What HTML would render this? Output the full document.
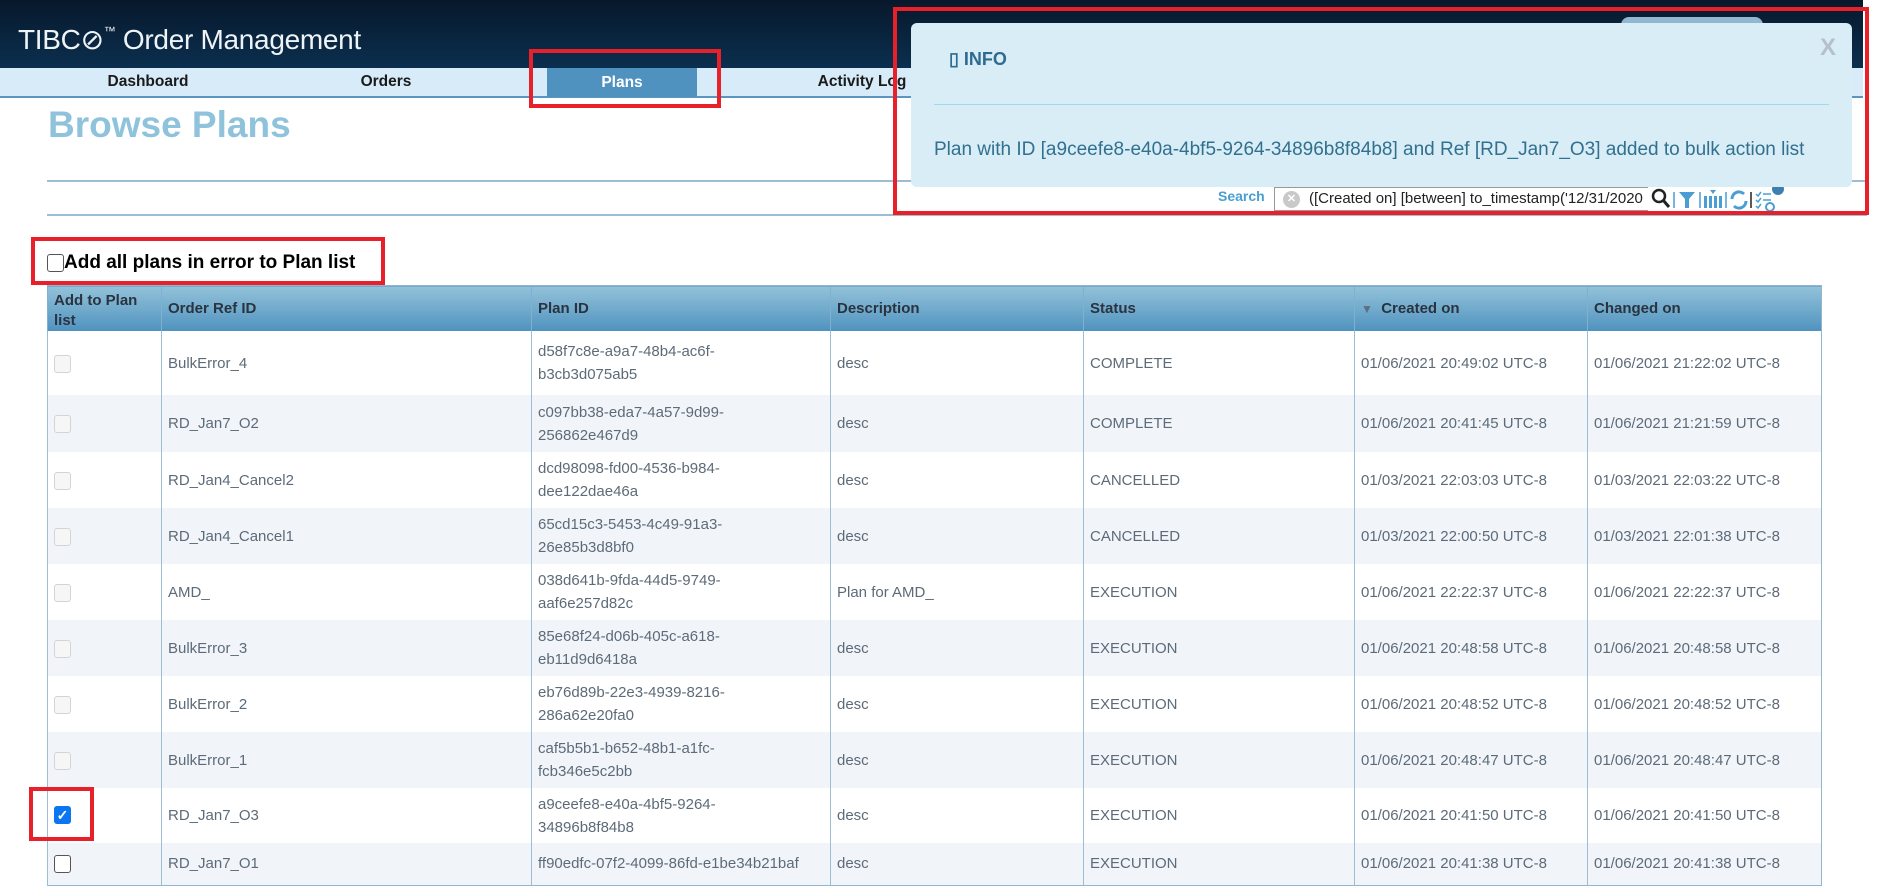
<!DOCTYPE html>
<html><head><meta charset="utf-8"><style>
*{box-sizing:border-box;margin:0;padding:0}
body{width:1880px;height:888px;background:#fff;font-family:"Liberation Sans",Arial,sans-serif;position:relative;overflow:hidden}
.hdr{position:absolute;left:0;top:0;width:1863px;height:68px;background:linear-gradient(#07182b,#0b2f4f)}
.logo{position:absolute;left:18px;top:23px;color:#eef3f7;font-size:28px;letter-spacing:-0.3px}
.logo sup{font-size:12px;vertical-align:14px}
.nav{position:absolute;left:0;top:68px;width:1863px;height:30px;background:#d7ecf8;border-bottom:2px solid #5b95c2}
.nav span{position:absolute;top:3px;font-weight:bold;font-size:15.5px;color:#1a1a1a;transform:translateX(-50%);line-height:22px}
.plans{position:absolute;left:547px;top:68px;width:150px;height:29px;background:#4f92c0;color:#fff;font-weight:bold;font-size:15.5px;text-align:center;line-height:29px}
.red{position:absolute;border:4px solid #e8202a}
h1{position:absolute;left:48px;top:104px;font-size:37px;color:#8fc3dc;font-weight:bold}
.ln{position:absolute;left:47px;width:1820px;height:2px;background:#9dbdd3}
.cbl{position:absolute;left:47px;top:252px;font-size:19px;font-weight:bold;color:#000;display:flex;align-items:center}
.cb{display:inline-block;width:17px;height:18px;border:1.5px solid #555;border-radius:3px;background:#fff}
table{position:absolute;left:47px;top:285px;border-collapse:collapse;width:1775px;table-layout:fixed;border:1px solid #93b6cf}
th{background:linear-gradient(#93c2d9,#4f92bf);color:#2a3340;font-size:15px;text-align:left;font-weight:bold;padding:0 6px;border-left:1px solid #7fb0cf;height:45px}
td{font-size:15px;color:#5d6b78;border-left:1px solid #9dbdd3;padding:0 6px;line-height:23px}
tr.a td{background:#f1f5fa}
.dcb{display:inline-block;width:17px;height:18px;border:1.5px solid #d4d4d4;border-radius:3px;background:#f6f6f6;vertical-align:middle}
.chk{display:inline-block;width:17px;height:18px;border-radius:3px;background:#0b76f0;color:#fff;font-size:14px;text-align:center;line-height:18px;font-weight:bold}
.pop{position:absolute;left:911px;top:23px;width:941px;height:164px;background:#d9edf7;border-radius:6px}
.pop .t{position:absolute;left:38px;top:26px;font-size:18px;font-weight:bold;color:#2f6b8f}
.pop .x{position:absolute;right:16px;top:11px;font-size:24px;font-weight:bold;color:#b5c0c8}
.pop .sep{position:absolute;left:23px;right:23px;top:81px;height:1px;background:#9fd8ef}
.pop .m{position:absolute;left:23px;top:116px;font-size:19px;color:#31708f;white-space:nowrap}
.srch{position:absolute;left:1218px;top:188px;font-size:14px;font-weight:bold;color:#4a9ed4}
.inp{position:absolute;left:1274px;top:187px;width:374px;height:24px;border:1px solid #999;border-right:none;font-size:15px;color:#222;padding-left:34px;line-height:22px;overflow:hidden;white-space:nowrap;background:#fff}
.inp i{position:absolute;left:8px;top:3px;width:17px;height:17px;border-radius:50%;background:#c9c9c9;color:#fff;font-style:normal;font-size:11px;text-align:center;line-height:17px;font-weight:bold}
</style></head><body>
<div class="hdr"><div class="logo">TIBC&#x2298;<sup>™</sup> Order Management</div>
<div style="position:absolute;left:1621px;top:17px;width:142px;height:14px;border-radius:8px 8px 0 0;background:#8fb7d0"></div></div>
<div class="nav"><span style="left:148px">Dashboard</span><span style="left:386px">Orders</span><span style="left:862px">Activity Log</span></div>
<div class="plans">Plans</div>
<div class="red" style="left:529px;top:49px;width:192px;height:59px"></div>
<h1>Browse Plans</h1>
<div class="ln" style="top:180px"></div>
<div class="ln" style="top:214px"></div>
<div class="cbl"><span class="cb"></span>Add all plans in error to Plan list</div>
<div class="red" style="left:31px;top:237px;width:354px;height:48px"></div>
<table>
<colgroup><col style="width:114px"><col style="width:370px"><col style="width:299px"><col style="width:253px"><col style="width:271px"><col style="width:233px"><col></colgroup>
<tr><th style="vertical-align:top;line-height:20px;padding-top:5px;color:#2a3340">Add to Plan list</th><th>Order Ref ID</th><th>Plan ID</th><th>Description</th><th>Status</th><th><span style="color:#5d6f80;font-size:12px">▼</span>&nbsp;&nbsp;Created on</th><th>Changed on</th></tr>
<tr style="height:64px"><td><span class="dcb"></span></td><td>BulkError_4</td><td>d58f7c8e-a9a7-48b4-ac6f-<br>b3cb3d075ab5</td><td>desc</td><td>COMPLETE</td><td>01/06/2021 20:49:02 UTC-8</td><td>01/06/2021 21:22:02 UTC-8</td></tr>
<tr class="a" style="height:57px"><td><span class="dcb"></span></td><td>RD_Jan7_O2</td><td>c097bb38-eda7-4a57-9d99-<br>256862e467d9</td><td>desc</td><td>COMPLETE</td><td>01/06/2021 20:41:45 UTC-8</td><td>01/06/2021 21:21:59 UTC-8</td></tr>
<tr style="height:56px"><td><span class="dcb"></span></td><td>RD_Jan4_Cancel2</td><td>dcd98098-fd00-4536-b984-<br>dee122dae46a</td><td>desc</td><td>CANCELLED</td><td>01/03/2021 22:03:03 UTC-8</td><td>01/03/2021 22:03:22 UTC-8</td></tr>
<tr class="a" style="height:56px"><td><span class="dcb"></span></td><td>RD_Jan4_Cancel1</td><td>65cd15c3-5453-4c49-91a3-<br>26e85b3d8bf0</td><td>desc</td><td>CANCELLED</td><td>01/03/2021 22:00:50 UTC-8</td><td>01/03/2021 22:01:38 UTC-8</td></tr>
<tr style="height:56px"><td><span class="dcb"></span></td><td>AMD_</td><td>038d641b-9fda-44d5-9749-<br>aaf6e257d82c</td><td>Plan for AMD_</td><td>EXECUTION</td><td>01/06/2021 22:22:37 UTC-8</td><td>01/06/2021 22:22:37 UTC-8</td></tr>
<tr class="a" style="height:56px"><td><span class="dcb"></span></td><td>BulkError_3</td><td>85e68f24-d06b-405c-a618-<br>eb11d9d6418a</td><td>desc</td><td>EXECUTION</td><td>01/06/2021 20:48:58 UTC-8</td><td>01/06/2021 20:48:58 UTC-8</td></tr>
<tr style="height:56px"><td><span class="dcb"></span></td><td>BulkError_2</td><td>eb76d89b-22e3-4939-8216-<br>286a62e20fa0</td><td>desc</td><td>EXECUTION</td><td>01/06/2021 20:48:52 UTC-8</td><td>01/06/2021 20:48:52 UTC-8</td></tr>
<tr class="a" style="height:56px"><td><span class="dcb"></span></td><td>BulkError_1</td><td>caf5b5b1-b652-48b1-a1fc-<br>fcb346e5c2bb</td><td>desc</td><td>EXECUTION</td><td>01/06/2021 20:48:47 UTC-8</td><td>01/06/2021 20:48:47 UTC-8</td></tr>
<tr style="height:55px"><td><span class="chk">✓</span></td><td>RD_Jan7_O3</td><td>a9ceefe8-e40a-4bf5-9264-<br>34896b8f84b8</td><td>desc</td><td>EXECUTION</td><td>01/06/2021 20:41:50 UTC-8</td><td>01/06/2021 20:41:50 UTC-8</td></tr>
<tr class="a" style="height:42px"><td><span class="cb" style="vertical-align:middle"></span></td><td>RD_Jan7_O1</td><td style="white-space:nowrap">ff90edfc-07f2-4099-86fd-e1be34b21baf</td><td>desc</td><td>EXECUTION</td><td>01/06/2021 20:41:38 UTC-8</td><td>01/06/2021 20:41:38 UTC-8</td></tr>
</table>
<div class="red" style="left:29px;top:787px;width:65px;height:54px"></div>
<div class="srch">Search</div>
<div class="inp"><i>✕</i>([Created on] [between] to_timestamp('12/31/2020</div>
<svg style="position:absolute;left:1650px;top:186px" width="160" height="28" viewBox="0 0 160 28">
<circle cx="9" cy="10" r="6" fill="none" stroke="#222" stroke-width="2.5"/><line x1="13" y1="14" x2="19" y2="21" stroke="#222" stroke-width="3"/>
<line x1="24" y1="6" x2="24" y2="22" stroke="#4a9ed4" stroke-width="1.5"/>
<path d="M29 6h16l-6 7v9h-4v-9z" fill="#4a9ed4"/>
<line x1="50" y1="6" x2="50" y2="22" stroke="#4a9ed4" stroke-width="1.5"/>
<path d="M54 10h3v12h-3zM59 10h3v12h-3zM64 10h3v12h-3zM69 10h3v12h-3z" fill="#4a9ed4"/><path d="M60 4h6l-3 4z" fill="#4a9ed4"/>
<line x1="76" y1="6" x2="76" y2="22" stroke="#4a9ed4" stroke-width="1.5"/>
<path d="M82 13a7 7 0 0 1 12-5M96 15a7 7 0 0 1-12 5" fill="none" stroke="#4a9ed4" stroke-width="3"/>
<line x1="101" y1="6" x2="101" y2="22" stroke="#222" stroke-width="1.5"/>
<path d="M106 8l2 2 3-4M106 14l2 2 3-4M106 20l2 2 3-4M113 8h8M113 14h8" fill="none" stroke="#4a9ed4" stroke-width="1.5"/>
<circle cx="120" cy="21" r="4" fill="none" stroke="#4a9ed4" stroke-width="2"/>
<circle cx="128" cy="3" r="6" fill="#3f7fb0"/>
</svg>
<div class="pop"><div class="t">&#x25AF; INFO</div><div class="x">X</div><div class="sep"></div>
<div class="m">Plan with ID [a9ceefe8-e40a-4bf5-9264-34896b8f84b8] and Ref [RD_Jan7_O3] added to bulk action list</div></div>
<div class="red" style="left:893px;top:7px;width:976px;height:208px"></div>
</body></html>
